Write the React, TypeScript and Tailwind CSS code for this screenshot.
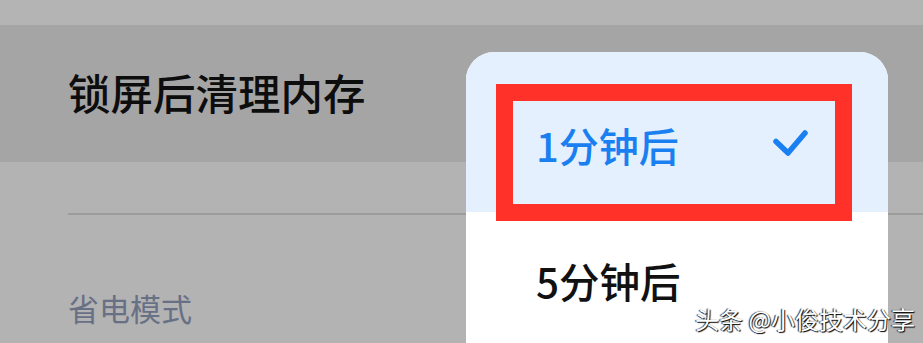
export default function App() {
  const font = { fontFamily: '"Noto Sans CJK SC", "Noto Sans", sans-serif' };

  return (
    <div className="relative w-[923px] h-[343px] overflow-hidden bg-[#b3b3b3]" style={font}>
      {/* settings list behind the dropdown */}
      <div className="h-[25px] bg-[#b4b4b4]" />
      <div className="h-[137px] bg-[#a5a5a5] flex items-center pl-[68px]">
        <span className="text-[42.5px] leading-none font-medium text-[#0d0d0d] -mt-[2px]">锁屏后清理内存</span>
      </div>
      <div className="pl-[68px]">
        <div className="mt-[51px] h-[2px] bg-[#9c9c9c]" />
        <div className="mt-[77px] text-[31px] leading-none text-[#687086]">省电模式</div>
      </div>

      {/* dropdown */}
      <div className="absolute left-[466px] top-[52px] w-[422px] h-[320px] rounded-[28px] overflow-hidden bg-white">
        <div className="h-[160px] bg-[#e4f0fd] pt-[42px]">
          <div className="h-[102px] flex items-center pl-[70px] pr-[80px]">
            <span className="text-[40px] leading-none font-medium text-[#1a7ff0]">1分钟后</span>
            <svg className="ml-auto -mt-[2px]" width="38" height="30" viewBox="0 0 38 30" fill="none">
              <path d="M6 12.5 L18 24 L35 4" stroke="#1a7ff0" strokeWidth="5.5" strokeLinecap="round" strokeLinejoin="round" />
            </svg>
          </div>
        </div>
        <div className="pt-[49px] pl-[70px]">
          <span className="text-[40.5px] leading-none font-medium text-[#111]">5分钟后</span>
        </div>
      </div>

      {/* red annotation box */}
      <div className="absolute left-[496px] top-[84px] w-[356px] h-[137px] border-[17px] border-[#ff3129]" />

      {/* watermark */}
      <div className="absolute left-[695px] top-[307px] text-[24px] leading-none text-white [text-shadow:1px_1px_1px_#000,-1px_0_1px_#222]">
        头条 @小俊技术分享
      </div>
    </div>
  );
}
